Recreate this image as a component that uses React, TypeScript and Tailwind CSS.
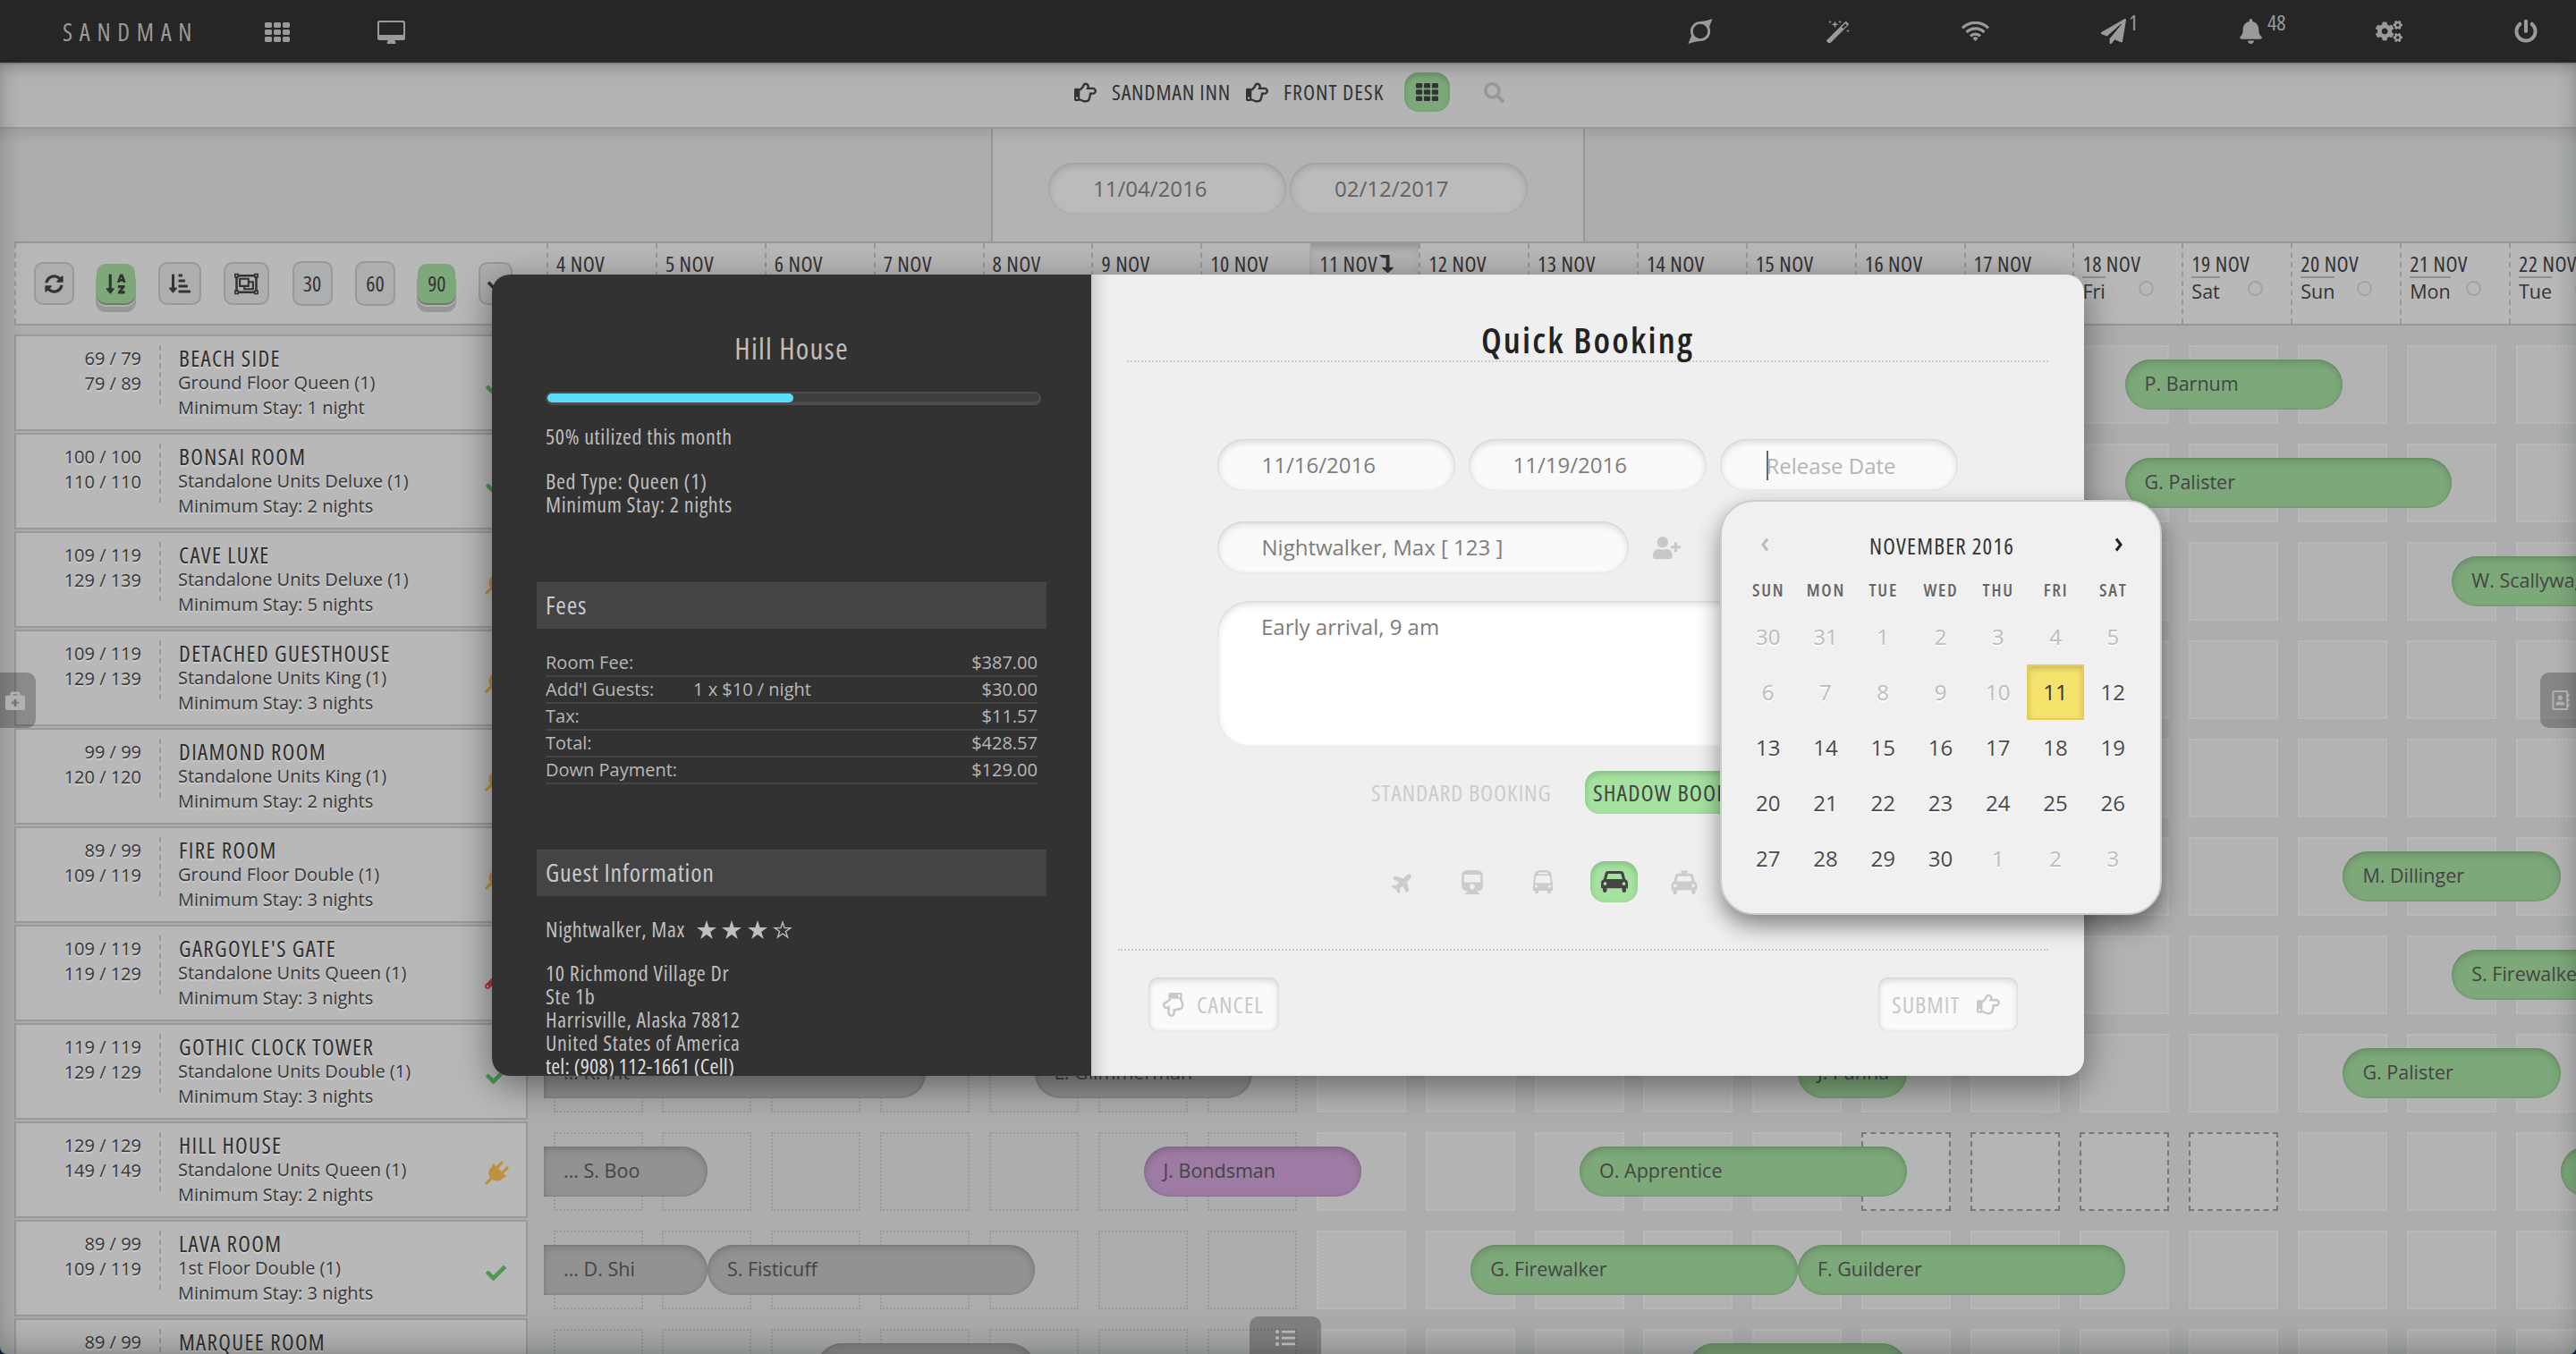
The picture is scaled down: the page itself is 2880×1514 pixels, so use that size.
import clsx from "clsx";
import type { ReactNode } from "react";
import {
  FaBell, FaBriefcaseMedical, FaCheck, FaCogs, FaLevelDownAlt, FaListUl, FaPaperPlane, FaPlane, FaPowerOff,
  FaRegAddressBook, FaRegHandPointDown, FaRegHandPointRight, FaRegObjectGroup, FaSearch, FaSortAlphaDown,
  FaSortAmountDownAlt, FaSyncAlt, FaTrain, FaUserPlus, FaWrench,
} from "react-icons/fa";

type Status = "ok" | "plug" | "repair";
type Booking = { name: string; start: number; nights: number; tone: "green" | "gray" | "purple" };
type Room = { low: string; high: string; name: string; type: string; stay: string; status: Status; bookings: Booking[] };

const DAY = 121.9;

const rooms: Room[] = [
  { low: "69 / 79", high: "79 / 89", name: "BEACH SIDE", type: "Ground Floor Queen (1)", stay: "1 night", status: "ok", bookings: [{ name: "P. Barnum", start: 14, nights: 2, tone: "green" }] },
  { low: "100 / 100", high: "110 / 110", name: "BONSAI ROOM", type: "Standalone Units Deluxe (1)", stay: "2 nights", status: "ok", bookings: [{ name: "G. Palister", start: 14, nights: 3, tone: "green" }] },
  { low: "109 / 119", high: "129 / 139", name: "CAVE LUXE", type: "Standalone Units Deluxe (1)", stay: "5 nights", status: "plug", bookings: [{ name: "W. Scallywag", start: 17, nights: 3, tone: "green" }] },
  { low: "109 / 119", high: "129 / 139", name: "DETACHED GUESTHOUSE", type: "Standalone Units King (1)", stay: "3 nights", status: "plug", bookings: [] },
  { low: "99 / 99", high: "120 / 120", name: "DIAMOND ROOM", type: "Standalone Units King (1)", stay: "2 nights", status: "plug", bookings: [] },
  { low: "89 / 99", high: "109 / 119", name: "FIRE ROOM", type: "Ground Floor Double (1)", stay: "3 nights", status: "plug", bookings: [{ name: "M. Dillinger", start: 16, nights: 2, tone: "green" }] },
  { low: "109 / 119", high: "119 / 129", name: "GARGOYLE'S GATE", type: "Standalone Units Queen (1)", stay: "3 nights", status: "repair", bookings: [{ name: "S. Firewalker", start: 17, nights: 3, tone: "green" }] },
  {
    low: "119 / 119", high: "129 / 129", name: "GOTHIC CLOCK TOWER", type: "Standalone Units Double (1)", stay: "3 nights", status: "ok",
    bookings: [
      { name: "... K. Int", start: -0.5, nights: 3.5, tone: "gray" },
      { name: "L. Glimmerman", start: 4, nights: 2, tone: "gray" },
      { name: "J. Panna", start: 11, nights: 1, tone: "green" },
      { name: "G. Palister", start: 16, nights: 2, tone: "green" },
    ],
  },
  {
    low: "129 / 129", high: "149 / 149", name: "HILL HOUSE", type: "Standalone Units Queen (1)", stay: "2 nights", status: "plug",
    bookings: [
      { name: "... S. Boo", start: -0.5, nights: 1.5, tone: "gray" },
      { name: "J. Bondsman", start: 5, nights: 2, tone: "purple" },
      { name: "O. Apprentice", start: 9, nights: 3, tone: "green" },
      { name: "", start: 18, nights: 2, tone: "green" },
    ],
  },
  {
    low: "89 / 99", high: "109 / 119", name: "LAVA ROOM", type: "1st Floor Double (1)", stay: "3 nights", status: "ok",
    bookings: [
      { name: "... D. Shi", start: -0.5, nights: 1.5, tone: "gray" },
      { name: "S. Fisticuff", start: 1, nights: 3, tone: "gray" },
      { name: "G. Firewalker", start: 8, nights: 3, tone: "green" },
      { name: "F. Guilderer", start: 11, nights: 3, tone: "green" },
    ],
  },
  {
    low: "89 / 99", high: "", name: "MARQUEE ROOM", type: "", stay: "", status: "ok",
    bookings: [
      { name: "", start: 2, nights: 2, tone: "gray" },
      { name: "", start: 10, nights: 2, tone: "green" },
    ],
  },
];

const days = Array.from({ length: 19 }, (_, i) => i + 4);
const weekdays = ["Sun", "Mon", "Tue", "Wed", "Thu", "Fri", "Sat"];
const fees = [
  ["Room Fee:", "", "$387.00"],
  ["Add'l Guests:", "1 x $10 / night", "$30.00"],
  ["Tax:", "", "$11.57"],
  ["Total:", "", "$428.57"],
  ["Down Payment:", "", "$129.00"],
];
const calendar = [30, 31, ...Array.from({ length: 30 }, (_, i) => i + 1), 1, 2, 3];

const cond = "font-stretch-[75%]";
const inset = "shadow-[inset_0_3px_8px_rgba(0,0,0,0.15),inset_0_0_3px_rgba(0,0,0,0.1)]";

function GridIcon({ className }: { className?: string }) {
  return (
    <svg viewBox="0 0 28 22" className={className} fill="currentColor" preserveAspectRatio="none">
      {[0, 8, 16].map((y) => [0, 10, 20].map((x) => <rect key={`${x}-${y}`} x={x} y={y} width="8" height="6" rx="1.4" />))}
    </svg>
  );
}

function DesktopIcon() {
  return (
    <svg viewBox="0 0 31 26" className="w-[31px] h-[26px]" fill="currentColor">
      <path fillRule="evenodd" d="M2.5 0h26A2.5 2.5 0 0 1 31 2.500v17a2.500 2.500 0 0 1-2.500 2.500H19.500c0 1.500.9 2 .9 3 0 .6-.4 1-1 1h-7.800c-.6 0-1-.4-1-1 0-1 .9-1.500.9-3H2.500A2.500 2.500 0 0 1 0 19.500v-17A2.500 2.500 0 0 1 2.500 0zM2.600 2a.6.6 0 0 0-.6.6V15.400a.6.6 0 0 0 .6.6h25.800a.6.6 0 0 0 .6-.6V2.600a.6.6 0 0 0-.6-.6z" />
    </svg>
  );
}

function LoopIcon() {
  return (
    <svg viewBox="0 0 28 28" className="size-7" fill="none">
      <circle cx="14" cy="14" r="9.700" stroke="currentColor" strokeWidth="2.800" />
      <path d="M12 3.200C18 2.800 22 2 27.500 0 26 4.500 24.500 7 23.500 11 21.500 7 18 4.500 12 3.200zM16 24.800C10 25.200 6 26 .5 28 2 23.500 3.500 21 4.500 17c2 4 5.500 6.500 11.500 7.800z" fill="currentColor" />
    </svg>
  );
}

function WandIcon() {
  return (
    <svg viewBox="0 0 26 26" className="size-[26px]" fill="currentColor">
      <path fillRule="evenodd" d="M.5 22.700 20.800 2.400a1.300 1.300 0 0 1 1.800 0l1.900 1.900a1.300 1.300 0 0 1 0 1.800L4.200 26.300a1.300 1.300 0 0 1-1.800 0L.5 24.500a1.300 1.300 0 0 1 0-1.800zM17 8.400l1.700 1.700 4.200-4.200-1.700-1.700z" />
      <path d="m9.500 1.200 1 3.100 3.100 1-3.100 1-1 3.100-1-3.100-3.100-1 3.100-1zM4 .6l.5 1.500 1.500.5-1.500.5L4 4.600l-.5-1.500L2 2.600l1.500-.5zM15 .6l.5 1.500 1.500.5-1.500.5-.5 1.500-.5-1.500-1.500-.5 1.500-.5zM24 10.500l.5 1.500 1.500.5-1.500.5-.5 1.500-.5-1.500-1.500-.5 1.500-.5z" />
    </svg>
  );
}

function WifiIcon() {
  return (
    <svg viewBox="0 0 31 22" className="w-[31px] h-[22px]" fill="none" stroke="currentColor" strokeWidth="3.200">
      <path d="M1 7.400a20.500 20.500 0 0 1 29 0M5.600 12a14 14 0 0 1 19.800 0M10 16.400a7.800 7.800 0 0 1 11 0" />
      <path d="M15.500 22l-3-3.300a4.300 4.300 0 0 1 6 0z" fill="currentColor" stroke="none" />
    </svg>
  );
}

function PlugIcon() {
  return (
    <svg viewBox="0 0 22 32" className="w-[22px] h-8 rotate-45" fill="currentColor">
      <path d="M5.200 1.600a1.600 1.600 0 0 1 3.200 0V9h5.200V1.600a1.600 1.600 0 0 1 3.200 0V9H20c.8 0 1.200.5 1.200 1.200 0 .7-.5 1.300-1.200 1.300v2.500c0 4.500-3.200 8-7.400 8.700V30.400a1.600 1.600 0 0 1-3.200 0v-7.700C5.200 22 2 18.500 2 14v-2.500c-.7 0-1.200-.6-1.200-1.300C.8 9.500 1.300 9 2 9h3.200z" />
    </svg>
  );
}

function Star({ hollow }: { hollow?: boolean }) {
  return (
    <svg viewBox="0 0 22 21" className="w-[22px] h-[21px]" fill={hollow ? "none" : "currentColor"} stroke="currentColor" strokeWidth={hollow ? 1.4 : 0}>
      <path d={hollow ? "M11 2.200l2.100 6.400h6.700l-5.400 3.900 2.100 6.400L11 15l-5.500 3.900 2.100-6.400-5.400-3.900h6.700z" : "M11 0l2.600 8H22l-6.800 4.900 2.600 8.100L11 16l-6.800 5 2.600-8.100L0 8h8.400z"} />
    </svg>
  );
}

const carPath =
  "M8 0h14c2 0 3.100 1 3.500 2.600l1.700 6.600c1.700.5 2.800 2 2.800 3.900v6.100h-2v2.500a2.250 2.250 0 0 1-4.500 0v-2.500h-17v2.500a2.250 2.250 0 0 1-4.500 0v-2.500H0v-6.100c0-1.900 1.100-3.400 2.800-3.900l1.700-6.600C4.900 1 6 0 8 0zM8.300 3c-.4 0-.6.2-.7.5L6.200 9h17.600l-1.400-5.500c-.1-.3-.3-.5-.7-.5zM4.500 12.200a1.900 1.900 0 1 0 0 3.800 1.900 1.900 0 0 0 0-3.800zM25.500 12.200a1.900 1.900 0 1 0 0 3.800 1.900 1.900 0 0 0 0-3.800z";

function CarIcon() {
  return (
    <svg viewBox="0 0 30 24" className="w-[30px] h-6" fill="currentColor">
      <path fillRule="evenodd" d={carPath} />
    </svg>
  );
}

function TaxiIcon() {
  return (
    <svg viewBox="0 -4 30 28" className="w-[30px] h-[27px]" fill="currentColor">
      <path d="M11.500-3.500h7v4h-7z" />
      <path fillRule="evenodd" d={carPath} />
    </svg>
  );
}

function BusIcon() {
  return (
    <svg viewBox="0 0 22 26" className="w-[22px] h-[26px]" fill="currentColor">
      <path fillRule="evenodd" d="M11 0c4.500 0 8 .9 8.800 2.600.4.900.7 2.400 1 5.400L22 15v8h-2v1.200a2 2 0 0 1-4 0V23H6v1.200a2 2 0 0 1-4 0V23H0v-8L1.200 8c.3-3 .6-4.500 1-5.400C3 .9 6.500 0 11 0zM6.300 2.600a.9.9 0 0 0 0 1.800h9.400a.9.9 0 0 0 0-1.800zM4.300 6c-.5 0-.8.3-.9.800l-1.200 6.600c-.1.600.2 1 .8 1h16c.6 0 .9-.4.8-1L18.600 6.800c-.1-.5-.4-.8-.9-.8zM3.600 16.500a1.500 1.500 0 1 0 0 3 1.500 1.500 0 0 0 0-3zM18.400 16.500a1.500 1.500 0 1 0 0 3 1.500 1.500 0 0 0 0-3z" />
    </svg>
  );
}

function TopBar() {
  return (
    <header className="h-[70px] bg-[#262626] text-[#9a9a9a] flex items-center justify-between pl-[70px] pr-[43px]">
      <div className="flex items-center pt-0.5">
        <span className={clsx(cond, "text-[27px] leading-none tracking-[7.700px] w-[226px] -mt-0.5")}>SANDMAN</span>
        <GridIcon className="w-7 h-[22px]" />
        <span className="ml-[98px]"><DesktopIcon /></span>
      </div>
      <div className="flex items-center">
        <LoopIcon />
        <span className="ml-[127px]"><WandIcon /></span>
        <span className="ml-[125px]"><WifiIcon /></span>
        <span className="ml-[125px] w-[155px] flex">
          <FaPaperPlane className="size-7" />
          <sup className={clsx(cond, "text-[24px] leading-none ml-[3px] -top-2")}>1</sup>
        </span>
        <span className="w-[152px] flex">
          <FaBell className="w-[25px] h-7" />
          <sup className={clsx(cond, "text-[24px] leading-none ml-1.5 -top-2")}>48</sup>
        </span>
        <FaCogs className="w-[30px] h-[30px]" />
        <FaPowerOff className="size-[26px] ml-[125px]" />
      </div>
    </header>
  );
}

function SubBar() {
  return (
    <nav className={clsx(cond, "h-[74px] border-y-2 border-t-[#8f8f8f] border-b-[#969696] bg-[#b4b4b4] shadow-[inset_0_8px_14px_-6px_rgba(0,0,0,0.14)] text-[#333] text-[24px] tracking-[0.800px] flex items-center pl-[1201px] pb-2")}>
      <FaRegHandPointRight className="size-[25px]" />
      <span className="ml-[17px] w-[150px]">SANDMAN INN</span>
      <FaRegHandPointRight className="size-[25px]" />
      <span className="ml-[17px] w-[135px] tracking-[1px]">FRONT DESK</span>
      <span className="w-[51px] h-11 rounded-2xl bg-[#7da97a] grid place-items-center shadow-[inset_0_3px_6px_rgba(0,0,0,0.18)]">
        <GridIcon className="w-[25px] h-5" />
      </span>
      <FaSearch className="size-[23px] ml-[38px] text-[#989898]" />
    </nav>
  );
}

function FilterBar() {
  return (
    <div className="h-[126px] flex justify-center">
      <div className="w-[664px] bg-[#b3b3b3] border-x-2 border-[#989898] flex justify-center items-center gap-[4px] pt-[8px]">
        {["11/04/2016", "02/12/2017"].map((d) => (
          <div key={d} className={clsx(inset, "w-[266px] h-[58px] rounded-full bg-[#bbb] pl-[50px] text-[24px] leading-[58px] text-[#626262]")}>
            {d}
          </div>
        ))}
      </div>
    </div>
  );
}

function ToolButton({ children, active, className }: { children: ReactNode; active?: boolean; className: string }) {
  return (
    <span
      className={clsx(
        "rounded-[10px] grid place-items-center shrink-0 text-[24px] text-[#333]",
        active
          ? "bg-[#7da97a] shadow-[0_2px_0_#777,0_4px_0_#b0b0b0,0_9px_0_1px_#989898]"
          : "bg-[#acaeb0] border-2 border-[#999]",
        className,
      )}
    >
      {children}
    </span>
  );
}

function DateHeader() {
  return (
    <div className="ml-4 h-[94px] border-y-2 border-[#969798] bg-[#b8b8b8] flex">
      <div className={clsx(cond, "w-[595px] shrink-0 border-l-2 border-dashed border-[#999] pl-5 flex items-center gap-[25.400px]")}>
        <ToolButton className="w-[45px] h-12"><FaSyncAlt className="size-[21px]" /></ToolButton>
        <ToolButton active className="w-[43px] h-11"><FaSortAlphaDown className="size-[25px]" /></ToolButton>
        <ToolButton className="w-12 h-12"><FaSortAmountDownAlt className="size-6" /></ToolButton>
        <ToolButton className="w-[51px] h-12"><FaRegObjectGroup className="size-[27px]" /></ToolButton>
        <ToolButton className="w-[45px] h-[50px]">30</ToolButton>
        <ToolButton className="w-[45px] h-[50px]">60</ToolButton>
        <ToolButton active className="w-[42px] h-11">90</ToolButton>
        <ToolButton className="w-[38px] h-12"><FaCheck className="size-[18px]" /></ToolButton>
      </div>
      {days.map((d) => (
        <div
          key={d}
          className={clsx(
            "shrink-0 border-l-2 pl-[9px] pt-[11px] text-[#333]",
            d === 11 ? "border-[#aaa] bg-[#b4b4b4] shadow-[inset_0_8px_10px_-4px_rgba(0,0,0,0.2)]" : "border-dashed border-[#999]",
          )}
          style={{ width: DAY }}
        >
          <div className={clsx(cond, "text-[24px] leading-6 tracking-[0.500px] whitespace-nowrap flex items-center")}>
            {d} NOV {d === 11 && <FaLevelDownAlt className="w-[14px] h-5 ml-[3px] scale-x-125" />}
          </div>
          <div className="flex items-start justify-between pr-[40px]">
            <span className="border-t-2 border-[#8f8f8f] text-[21.500px] leading-[29px] mt-0.5">{weekdays[(d + 1) % 7]}</span>
            <span className="w-[17px] h-[17px] rounded-full border-2 border-[#a3a3a3] mt-[7px] -mr-[9px]" />
          </div>
        </div>
      ))}
    </div>
  );
}

function StatusIcon({ status }: { status: Status }) {
  if (status === "ok") return <FaCheck className="size-[23px] text-[#4d9a50]" />;
  if (status === "plug") return <PlugIcon />;
  return <FaWrench className="size-[25px] text-[#c02f35]" />;
}

const tones = { green: "bg-[#7da97a]", gray: "bg-[#929292]", purple: "bg-[#9d7ba4]" };

function RoomRow({ room }: { room: Room }) {
  const picked = room.name === "HILL HOUSE";
  return (
    <div className="flex h-[108px]">
      <div className="w-[574px] shrink-0 border-2 border-[#999] bg-[#b8b8b8] flex text-[20px] leading-7 text-[#383838] [text-shadow:0_2px_1px_rgba(255,255,255,0.350)]">
        <div className="w-[162px] h-[66px] mt-2.5 pr-5 pt-px border-r-2 border-dashed border-[#999] text-right">
          <div>{room.low}</div>
          <div>{room.high}</div>
        </div>
        <div className="pl-[19px] pt-2.5 w-[340px]">
          <div className={clsx(cond, "pl-px text-[25px] tracking-[1.350px] text-[#2e2e2e] whitespace-nowrap")}>{room.name}</div>
          <div>{room.type}</div>
          {room.stay && <div>Minimum Stay: {room.stay}</div>}
        </div>
        <div className="w-[68px] flex items-center justify-center pt-2.5 text-[#bf9140]"><StatusIcon status={room.status} /></div>
      </div>
      <div className="relative grow min-w-0">
        <div className="flex pl-[28.500px] pt-3" style={{ gap: DAY - 100 }}>
          {days.map((d) => (
            <div
              key={d}
              className={clsx(
                "w-[100px] h-[88px] shrink-0 border-2",
                picked && d >= 16 && d <= 19
                  ? "border-dashed border-[#777] bg-[#b4b6b5]"
                  : d < 11 ? "border-dotted border-[#999]" : "border-dotted border-[#bcbcbc] bg-[#b3b3b3]",
              )}
            />
          ))}
        </div>
        {room.bookings.map((b) => (
          <div
            key={b.start}
            className={clsx(
              "absolute top-7 h-14 pl-[22px] text-[21.500px] leading-[53px] text-[#444] whitespace-nowrap shadow-[inset_0_4px_8px_rgba(0,0,0,0.15),inset_0_0_3px_rgba(0,0,0,0.16)]",
              b.start < 0 ? "rounded-r-[28px]" : "rounded-[28px]",
              tones[b.tone],
            )}
            style={{ left: 79 + b.start * DAY, width: b.nights * DAY }}
          >
            {b.name}
          </div>
        ))}
      </div>
    </div>
  );
}

function SectionTitle({ children }: { children: ReactNode }) {
  return (
    <h3 className={clsx(cond, "-ml-2.5 w-[570px] h-[52px] bg-[#444] border-t border-[#4c4c4c] pl-[10px] text-[28px] leading-[49px] tracking-[0.750px] text-[#c8c8c8]")}>
      {children}
    </h3>
  );
}

function RoomPanel() {
  return (
    <aside className={clsx(cond, "w-[670px] bg-[#323232] rounded-l-[20px] pl-[60px] pt-[61px] text-[24px] leading-[26px] tracking-[0.650px] text-[#bebebe] overflow-hidden")}>
      <h2 className="text-[33px] leading-[44px] tracking-[1.200px] pr-[60px] text-center">Hill House</h2>
      <div className="mt-[26px] w-[554px] h-[15px] rounded-lg border-2 border-b-4 border-[#4d4d4d] bg-[#3e3e3e]">
        <div className="w-1/2 h-[10px] rounded-full bg-[#5ddcfa]" />
      </div>
      <div className="mt-[22px]">50% utilized this month</div>
      <div className="mt-[24px]">Bed Type: Queen (1)</div>
      <div>Minimum Stay: 2 nights</div>
      <div className="mt-[74px]"><SectionTitle>Fees</SectionTitle></div>
      <div className="mt-[24px] w-[550px] font-stretch-[100%] text-[20px] tracking-normal leading-7 text-[#b8b8b8]">
        {fees.map(([label, note, amount]) => (
          <div key={label} className="flex h-[30px] border-b-2 border-[#444]">
            <span className="w-[165px]">{label}</span>
            <span className="grow">{note}</span>
            <span>{amount}</span>
          </div>
        ))}
      </div>
      <div className="mt-[73px]"><SectionTitle>Guest Information</SectionTitle></div>
      <div className="mt-[24px] flex items-center gap-[6.500px]">
        <span className="mr-[6px]">Nightwalker, Max</span>
        <Star />
        <Star />
        <Star />
        <Star hollow />
      </div>
      <address className="not-italic mt-[23px]">
        <div>10 Richmond Village Dr</div>
        <div>Ste 1b</div>
        <div>Harrisville, Alaska 78812</div>
        <div>United States of America</div>
        <div className="text-[#ddd] tracking-[0.180px]">tel: (908) 112-1661 (Cell)</div>
      </address>
    </aside>
  );
}

function Field({ children, className }: { children: ReactNode; className?: string }) {
  return (
    <div className={clsx(inset, "h-[58px] rounded-full bg-[#fafafa] pl-[49.500px] text-[24px] leading-[57px] text-[#7d7d7d] whitespace-nowrap", className)}>
      {children}
    </div>
  );
}

function BookingForm() {
  return (
    <section className="grow bg-[#efefef] rounded-r-[20px] shadow-[inset_16px_0_16px_-10px_rgba(0,0,0,0.18)] overflow-hidden">
      <h1 className={clsx(cond, "ml-10 w-[1030px] h-[98px] border-b-2 border-dotted border-[#c8c8c8] pt-[46px] -mr-1 text-[40px] leading-[54px] tracking-[2.200px] font-semibold text-[#222] text-center")}>
        Quick Booking
      </h1>
      <div className="mt-[86px] ml-[141px] flex gap-[15px]">
        <Field className="w-[266px]">11/16/2016</Field>
        <Field className="w-[266px]">11/19/2016</Field>
        <Field className="w-[266px] flex items-center !text-[#b5b5b5]">
          <span className="w-0.5 h-[33px] bg-[#666] -mr-0.5 ml-0.5" />
          Release Date
        </Field>
      </div>
      <div className="mt-[34px] ml-[141px] flex items-center gap-[27px]">
        <Field className="w-[460px]">Nightwalker, Max [ 123 ]</Field>
        <FaUserPlus className="w-[31px] h-[31px] text-[#c8c8c8]" />
      </div>
      <div className={clsx(inset, "mt-[31px] ml-[141px] w-[828px] h-[163px] rounded-[36px] bg-white pl-[49px] pt-3 text-[24px] leading-[34px] text-[#7d7d7d]")}>
        Early arrival, 9 am
      </div>
      <div className={clsx(cond, "mt-[27px] ml-[313px] flex items-center text-[26px] tracking-[0.850px]")}>
        <span className="w-[239px] text-[#ccc]">STANDARD BOOKING</span>
        <span className="h-12 w-[210px] rounded-2xl bg-[#a5e2a0] pl-[9px] leading-[48px] text-[#444] shadow-[inset_0_3px_7px_rgba(0,0,0,0.18)] tracking-[1.100px]">SHADOW BOOKING</span>
      </div>
      <div className="mt-[53px] ml-[336px] h-[46px] flex items-center text-[#ccc]">
        <FaPlane className="size-[25px] -rotate-45" />
        <FaTrain className="w-[26px] h-[27px] ml-[52px]" />
        <span className="ml-[55px]"><BusIcon /></span>
        <span className="ml-[42px] w-[53px] h-[46px] rounded-2xl bg-[#a5e2a0] text-[#444] grid place-items-center shadow-[inset_0_3px_7px_rgba(0,0,0,0.18)]"><CarIcon /></span>
        <span className="ml-[37px]"><TaxiIcon /></span>
      </div>
      <div className={clsx(cond, "mt-[52px] ml-[30px] w-[1040px] border-t-2 border-dotted border-[#c8c8c8] pt-[30px] pl-[34px] pr-[34px] flex justify-between text-[26px] leading-[60px] tracking-[0.950px] text-[#c8c8c8]")}>
        <span className={clsx(inset, "w-[146px] h-[60px] rounded-[10px] bg-[#fafafa] flex items-center pl-[14px] gap-[13px]")}>
          <FaRegHandPointDown className="size-[27px]" /> CANCEL
        </span>
        <span className={clsx(inset, "w-[156px] h-[60px] rounded-[10px] bg-[#fafafa] flex items-center pl-[15px] gap-[19px]")}>
          SUBMIT <FaRegHandPointRight className="size-[26px]" />
        </span>
      </div>
    </section>
  );
}

function DatePicker() {
  return (
    <div className="absolute left-[1923px] top-[559px] w-[494px] h-[464px] rounded-[38px] bg-[#f0f0f0] border-2 border-[#ccc] px-[20px] pt-[27px] shadow-[0_12px_26px_rgba(0,0,0,0.45)]">
      <div className={clsx(cond, "flex items-center justify-between pl-[23px] pr-[21px] h-[46px] text-[25px] tracking-[1.200px] text-[#333]")}>
        <svg viewBox="0 0 10 16" className="w-2.5 h-4 -mt-1 text-[#bbb]" fill="none" stroke="currentColor" strokeWidth="3"><path d="M8 1.500 3 8l5 6.500" /></svg>
        NOVEMBER 2016
        <svg viewBox="0 0 10 16" className="w-2.5 h-4 -mt-1 text-[#222]" fill="none" stroke="currentColor" strokeWidth="3"><path d="M2 1.500 7 8l-5 6.500" /></svg>
      </div>
      <div className="grid grid-cols-7 text-center">
        {weekdays.map((d) => (
          <div key={d} className={clsx(cond, "h-[47px] leading-[51px] text-[20px] font-semibold tracking-[1.800px] text-[#666] [text-shadow:0_2px_0_#fff]")}>{d.toUpperCase()}</div>
        ))}
        {calendar.map((d, i) => (
          <div
            key={i}
            className={clsx(
              "h-[62px] leading-[62px] text-[24px] mr-px [text-shadow:0_2px_0_#fff]",
              i === 12
                ? "bg-[#f6e36e] border-2 border-[#eccb55] !leading-[58px] text-[#333] shadow-[inset_0_3px_6px_rgba(0,0,0,0.18)] ![text-shadow:none]"
                : i < 12 || i > 31 ? "text-[#bdbdbd]" : "text-[#4a4a4a]",
            )}
          >
            {d}
          </div>
        ))}
      </div>
    </div>
  );
}

export default function App() {
  return (
    <div className="bg-[#14233b]">
      <div className="relative w-[2880px] h-[1514px] overflow-hidden rounded-b-[8px] bg-[#acadaf] font-['Open_Sans',sans-serif]">
        <TopBar />
        <SubBar />
        <FilterBar />
        <DateHeader />
        <div className="pl-4 pt-2.5 flex flex-col gap-0.5">
          {rooms.map((r) => <RoomRow key={r.name} room={r} />)}
        </div>

        {/* edge shading */}
        <div className="pointer-events-none absolute inset-x-0 top-[70px] bottom-0 shadow-[inset_0_0_26px_rgba(50,60,50,0.3),inset_0_-40px_50px_-30px_rgba(0,0,0,0.15)]" />
        <div className="pointer-events-none absolute inset-x-0 top-[144px] h-4 bg-linear-to-b from-black/8 to-transparent" />

        {/* drawer handles */}
        <div className="absolute left-0 top-[752px] w-10 h-[62px] rounded-r-[10px] bg-black/25 text-[#b0b0b0] flex items-center pl-1.5"><FaBriefcaseMedical className="size-[22px]" /></div>
        <div className="absolute right-0 top-[752px] w-10 h-[62px] rounded-l-[10px] bg-black/25 text-[#b0b0b0] flex items-center pl-3"><FaRegAddressBook className="size-[22px]" /></div>
        <div className="absolute left-[1397px] top-[1472px] w-20 h-[50px] rounded-t-[10px] bg-black/25 text-[#b5b5b5] flex justify-center pt-[13px]"><FaListUl className="size-[22px]" /></div>

        {/* booking dialog */}
        <div className="absolute left-[550px] top-[307px] w-[1780px] h-[896px] rounded-[20px] flex shadow-[0_10px_40px_rgba(0,0,0,0.45)]">
          <RoomPanel />
          <BookingForm />
        </div>
        <DatePicker />
      </div>
    </div>
  );
}
